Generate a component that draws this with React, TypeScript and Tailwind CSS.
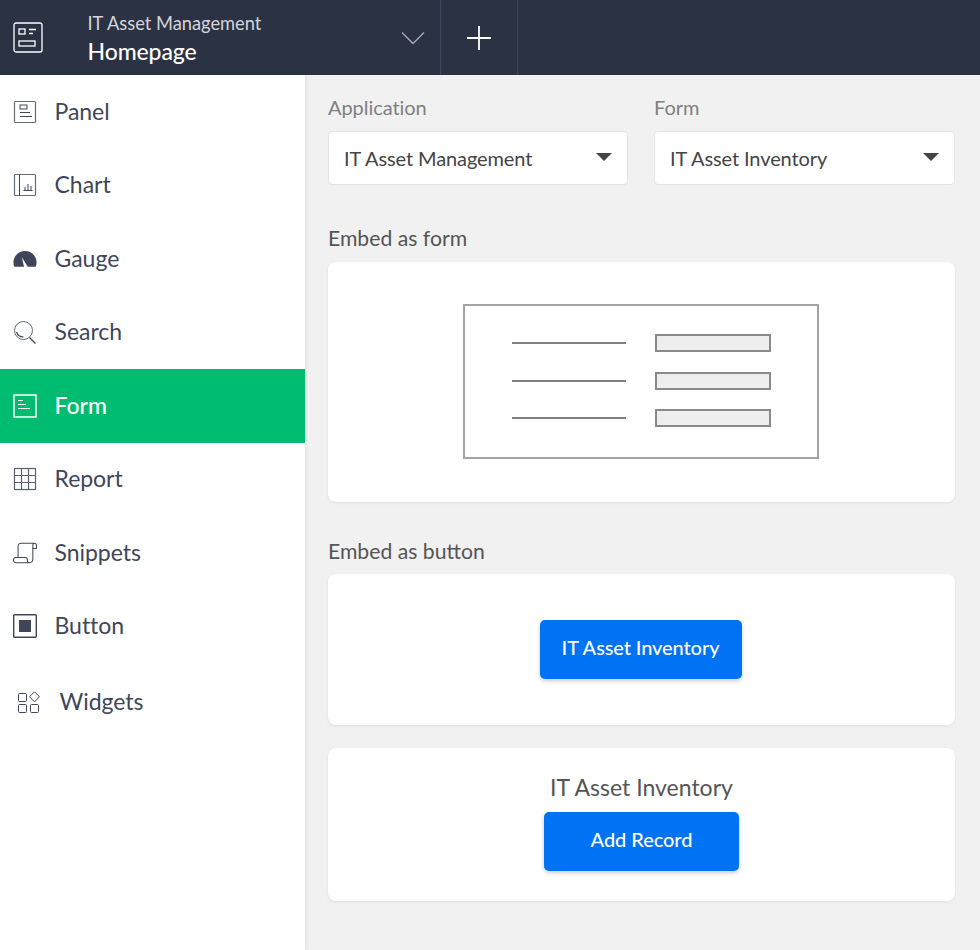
import React from "react";

const S = "#3f4659";

const PanelIcon = () => (
  <svg width="24" height="24" viewBox="0 0 24 24" fill="none" stroke={S} strokeWidth="1">
    <rect x="1.5" y="1.5" width="21" height="21" rx="1" strokeWidth="1.2" opacity="0.8" />
    <rect x="7" y="5" width="7" height="4" />
    <path d="M7 12.5h10M7 16.5h12" />
  </svg>
);
const ChartIcon = () => (
  <svg width="24" height="24" viewBox="0 0 24 24" fill="none" stroke={S} strokeWidth="1">
    <rect x="1.5" y="1.5" width="21" height="21" rx="1" strokeWidth="1.2" opacity="0.8" />
    <path d="M6.5 1.5v21" />
    <path d="M10.5 17.5h9M12 17v-3M15 17v-6M18 17v-4" />
  </svg>
);
const GaugeIcon = () => (
  <svg width="26" height="18" viewBox="0 0 26 18">
    <path d="M1.400 17.500A12.500 12.500 0 1 1 24.600 17.500H16L9.500 7 12 17.500z" fill={S} />
  </svg>
);
const SearchIcon = () => (
  <svg width="24" height="24" viewBox="0 0 24 24" fill="none" stroke={S} strokeWidth="1">
    <circle cx="10.500" cy="10.500" r="9" opacity="0.8" />
    <path d="M3.500 12c1 3 3.500 5 7 5" strokeWidth="1.200" />
    <path d="M16.500 17.500l6 6" strokeWidth="1.200" />
  </svg>
);
const ReportIcon = () => (
  <svg width="24" height="24" viewBox="0 0 24 24" fill="none" stroke={S} strokeWidth="1.200" opacity="0.85">
    <rect x="1.500" y="1.500" width="21" height="21" />
    <path d="M8.500 1.500v21M15.500 1.500v21M1.500 8.500h21M1.500 15.500h21" />
  </svg>
);
const SnippetsIcon = () => (
  <svg width="26" height="24" viewBox="0 0 26 24" fill="none" stroke={S} strokeWidth="1.100">
    <path d="M5.500 17V5c0-2 1-3.500 3-3.500H23c1.500 0 2.500 1 2.500 3V7h-4V4c0-1.500.8-2.500 1.500-2.500" />
    <path d="M21.500 7v11c0 3-1.500 4.500-3.500 4.500H3c-1.500 0-2.500-1-2.500-2.500s1-3 2.500-3h11c1 0 1.500 1 1.500 2.500s.5 3 2.500 3" />
  </svg>
);
const ButtonIcon = () => (
  <svg width="24" height="24" viewBox="0 0 24 24" fill="none">
    <rect x="0.700" y="0.700" width="22.600" height="22.600" rx="1" stroke={S} strokeWidth="1.400" />
    <rect x="6" y="6" width="12" height="12" fill={S} />
  </svg>
);
const WidgetsIcon = () => (
  <svg width="22" height="22" viewBox="0 0 22 22" fill="none" stroke={S} strokeWidth="1">
    <rect x="0.500" y="2.500" width="8" height="8" rx="1" />
    <rect x="0.500" y="13.500" width="8" height="8" rx="1" />
    <rect x="12.500" y="13.500" width="8" height="8" rx="1" />
    <path d="M16.500 0.800l5 5-5 5-5-5z" />
  </svg>
);
const FormIcon = () => (
  <svg width="24" height="24" viewBox="0 0 24 24" fill="none" stroke="#fff" strokeWidth="1">
    <rect x="1" y="1" width="22" height="22" strokeWidth="1.500" />
    <path d="M5 6.500h5M5 10.500h8M5 14.500h12" />
  </svg>
);

const items = [
  { label: "Panel", icon: <PanelIcon /> },
  { label: "Chart", icon: <ChartIcon /> },
  { label: "Gauge", icon: <GaugeIcon /> },
  { label: "Search", icon: <SearchIcon /> },
  { label: "Form", icon: <FormIcon />, active: true },
  { label: "Report", icon: <ReportIcon /> },
  { label: "Snippets", icon: <SnippetsIcon /> },
  { label: "Button", icon: <ButtonIcon /> },
];

const Select = ({ label, value, cls }: { label: string; value: string; cls: string }) => (
  <div className={cls}>
    <div className="text-[20px] leading-[24px] tracking-[-0.05px] text-[#808080] h-[37px] pt-[1px]">{label}</div>
    <div className="h-[54px] bg-white border border-[#e4e4e4] rounded-[4px] flex items-center justify-between pl-[15px] pr-[15px]">
      <span className="text-[20px] tracking-[-0.1px] text-[#444444] mb-[1px]">{value}</span>
      <span className="w-0 h-0 border-l-[8px] border-r-[8px] border-t-[8px] border-l-transparent border-r-transparent border-t-[#444444] mb-[2px]" />
    </div>
  </div>
);

const FormRow = () => (
  <div className="flex items-center justify-between">
    <div className="w-[114px] h-[2px] bg-[#808080] ml-[47px]" />
    <div className="w-[116px] h-[18px] bg-[#eeeeee] border-2 border-[#8a8a8a] mr-[46px]" />
  </div>
);

export default function App() {
  return (
    <div className="w-[980px] h-[950px] overflow-hidden flex flex-col bg-[#f1f1f1] font-['Lato','Liberation_Sans',sans-serif]">
      <header className="h-[75px] shrink-0 bg-[#2a3244] flex">
        <div className="w-[87.500px] shrink-0 flex items-center pl-[13px]">
          <svg width="30" height="31" viewBox="0 0 30 31" fill="none" stroke="#fff" strokeWidth="1.300">
            <rect x="1" y="1" width="28" height="29" rx="2" />
            <rect x="6" y="7" width="6" height="5" />
            <path d="M16 7.500h7M16 11.500h4" />
            <rect x="6" y="19" width="16" height="5" />
          </svg>
        </div>
        <div className="w-[300.500px] shrink-0 flex flex-col pt-[11px]">
          <div className="text-[18.300px] leading-[24px] text-[#d4d5d9]">IT Asset Management</div>
          <div className="text-[23px] leading-[30px] tracking-[-0.1px] text-white font-medium mt-[1px]">Homepage</div>
        </div>
        <div className="w-[53px] flex items-center justify-center border-r border-[#3f4659] pr-[3px] pt-[1px]">
          <svg width="24" height="14" viewBox="0 0 24 14" fill="none" stroke="#a9acb4" strokeWidth="1.300">
            <path d="M1 1.500l11 11 11-11" />
          </svg>
        </div>
        <div className="w-[77px] flex items-center justify-center border-r border-[#3f4659]">
          <svg width="26" height="26" viewBox="0 0 26 26" fill="none" stroke="#fff" strokeWidth="1.800">
            <path d="M13 1v24M1 13h24" />
          </svg>
        </div>
      </header>
      <div className="flex-1 flex min-h-0">
        <nav className="w-[305px] shrink-0 bg-white shadow-[1px_0_4px_rgba(0,0,0,0.08)]">
          {items.map((it) => (
            <div
              key={it.label}
              className={`h-[73.5px] flex items-center pl-[13px] gap-[18px] text-[23px] tracking-[-0.03px] ${
                it.active ? "bg-[#00bc70] text-white font-medium" : "text-[#3f4659]"
              }`}
            >
              <span className="w-[24px] flex justify-center">{it.icon}</span>
              <span className="mb-[2px] -ml-[0.500px]">{it.label}</span>
            </div>
          ))}
          <div className="h-[73.5px] flex items-center pl-[18px] gap-[20px] text-[23px] tracking-[-0.03px] text-[#3f4659] pt-[4px]">
            <WidgetsIcon />
            <span className="mb-[2px] -ml-[0.500px]">Widgets</span>
          </div>
        </nav>
        <main className="flex-1 pl-[23px] pr-[25px] pt-[19px]">
          <div className="flex gap-[26px]">
            <Select label="Application" value="IT Asset Management" cls="w-[300px] shrink-0" />
            <Select label="Form" value="IT Asset Inventory" cls="flex-1 min-w-0" />
          </div>
          <div className="text-[21.200px] leading-[24px] text-[#555555] mt-[41px]">Embed as form</div>
          <section className="mt-[12px] h-[240px] bg-white rounded-[8px] shadow-[0_1px_3px_rgba(0,0,0,0.08)] flex items-center justify-center pb-[2px] pr-[2px]">
            <div className="w-[356px] h-[155px] border-2 border-[#a3a3a3] flex flex-col justify-center gap-[19.500px] bg-white pb-[1px]">
              <FormRow />
              <FormRow />
              <FormRow />
            </div>
          </section>
          <div className="text-[21.200px] leading-[24px] text-[#555555] mt-[37px]">Embed as button</div>
          <section className="mt-[11px] h-[151px] bg-white rounded-[8px] shadow-[0_1px_3px_rgba(0,0,0,0.08)] flex items-center justify-center">
            <div className="w-[202px] h-[59px] ml-[-2px] rounded-[5px] bg-[#0073f5] shadow-[0_2px_4px_rgba(0,0,0,0.2)] text-white text-[20px] tracking-[-0.1px] font-medium flex items-center justify-center pb-[5px]">
              IT Asset Inventory
            </div>
          </section>
          <section className="mt-[23px] h-[153px] bg-white rounded-[8px] shadow-[0_1px_3px_rgba(0,0,0,0.08)] flex flex-col items-center pt-[24px]">
            <div className="text-[23px] leading-[30px] text-[#555555] h-[40px]">IT Asset Inventory</div>
            <div className="w-[195px] h-[59px] rounded-[5px] bg-[#0073f5] shadow-[0_2px_4px_rgba(0,0,0,0.2)] text-white text-[20px] tracking-[-0.05px] font-medium flex items-center justify-center pb-[5px]">
              Add Record
            </div>
          </section>
        </main>
      </div>
    </div>
  );
}
